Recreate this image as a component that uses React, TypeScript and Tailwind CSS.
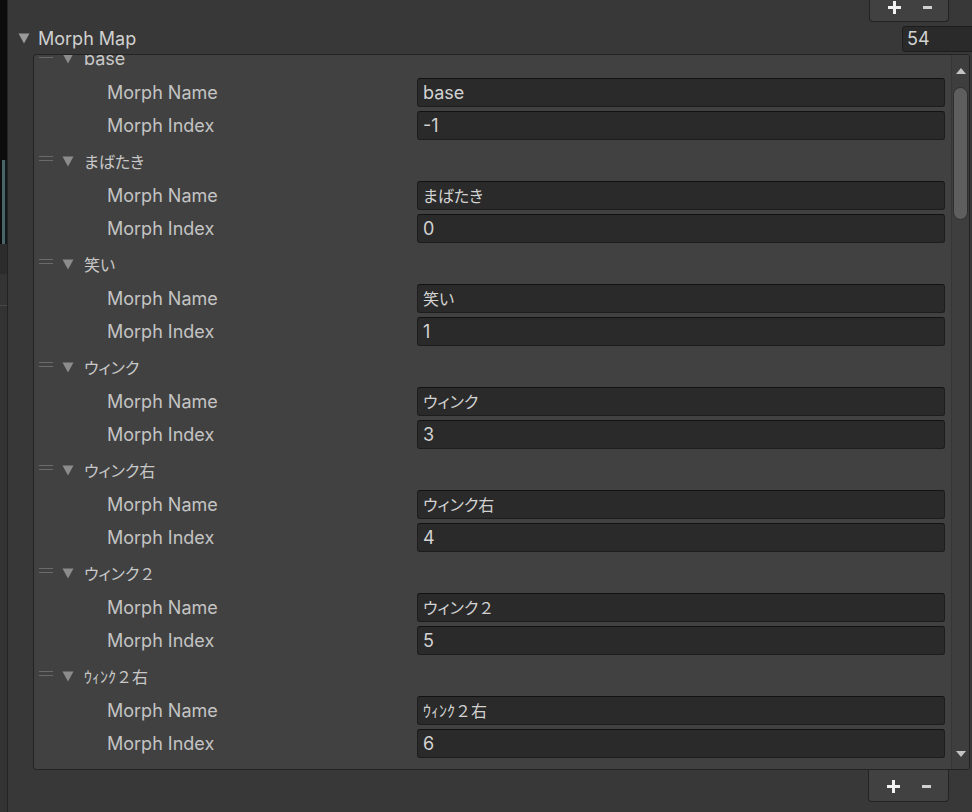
import React from 'react';

type Morph = { name: string; index: string };

const morphs: Morph[] = [
    { name: 'base', index: '-1' },
    { name: 'まばたき', index: '0' },
    { name: '笑い', index: '1' },
    { name: 'ウィンク', index: '3' },
    { name: 'ウィンク右', index: '4' },
    { name: 'ウィンク２', index: '5' },
    { name: 'ｳｨﾝｸ２右', index: '6' },
];

// the editor's japanese fallback font is narrower than the latin one
function JpText({ text }: { text: string }) {
    const parts = text.split(/([\u0000-\u007f]+|２)/).filter(Boolean);
    return (
        <>
            {parts.map((p, i) => {
                if (/^[\u0000-\u007f]+$/.test(p)) return <span key={i}>{p}</span>;
                if (p === '２') return <span key={i} className="text-[16px]">{p}</span>;
                return (
                    <span key={i} className="text-[16px] [font-feature-settings:'palt']">
                        {p}
                    </span>
                );
            })}
        </>
    );
}

function Triangle({ className }: { className?: string }) {
    return (
        <svg width="12" height="11" viewBox="0 0 12 11" className={className}>
            <path d="M0.5 0.5 L11.5 0.5 L6 10.5 Z" fill="currentColor" />
        </svg>
    );
}

function PlusMinus() {
    return (
        <div className="flex items-center">
            <svg width="13" height="13" viewBox="0 0 13 13" className="ml-[18px]">
                <rect x="5" y="0" width="3" height="13" fill="#f2f2f2" />
                <rect x="0" y="5" width="13" height="3" fill="#f2f2f2" />
            </svg>
            <svg width="9" height="3" viewBox="0 0 9 3" className="ml-[22px]">
                <rect x="0" y="0" width="9" height="3" fill="#cfcfcf" />
            </svg>
        </div>
    );
}

function Field({ value }: { value: string }) {
    return (
        <div className="flex-1 h-[29px] flex items-center pl-[5px] rounded-[3px] bg-[#2a2a2a] border border-[#1d1d1d] border-t-[#121212] text-[#d2d2d2] text-[18px] whitespace-nowrap overflow-hidden">
            <JpText text={value} />
        </div>
    );
}

function MorphElement({ morph }: { morph: Morph }) {
    return (
        <div className="pb-[2px]">
            <div className="h-[35px] flex items-center pl-[5px]">
                <div className="w-[14px] self-start mt-[12px] flex flex-col gap-[3px]">
                    <div className="h-px bg-[#6a6a6a]" />
                    <div className="h-px bg-[#6a6a6a]" />
                </div>
                <Triangle className="ml-[9px] text-[#8c8c8c]" />
                <span className="ml-[10px] text-[18px] text-[#c8c8c8] whitespace-nowrap">
                    <JpText text={morph.name} />
                </span>
            </div>
            <div className="h-[33px] flex items-center pr-[6px]">
                <span className="w-[383px] pl-[73px] text-[18px] text-[#c4c4c4] shrink-0">Morph Name</span>
                <Field value={morph.name} />
            </div>
            <div className="h-[33px] flex items-center pr-[6px]">
                <span className="w-[383px] pl-[73px] text-[18px] text-[#c4c4c4] shrink-0">Morph Index</span>
                <Field value={morph.index} />
            </div>
        </div>
    );
}

export default function App() {
    return (
        <div className="w-[972px] h-[812px] bg-[#383838] flex overflow-hidden font-['Inter','Noto_Sans_CJK_JP',sans-serif]">
            {/* left edge of the neighbouring window */}
            <div className="w-[8px] shrink-0 flex flex-col border-r border-[#232323]">
                <div className="h-[160px] bg-[#0c0c0c]" />
                <div className="h-[84px] bg-[#0c0c0c] flex pl-[2px]">
                    <div className="flex-1 bg-[#12191b] border-l-[3px] border-[#4b6469]" />
                </div>
                <div className="h-[30px] bg-[#2c2c2c]" />
                <div className="h-[32px] bg-[#343434] border-b border-[#4a4a4a]" />
                <div className="flex-1 bg-[#333333]" />
            </div>

            <div className="flex-1 flex flex-col">
                {/* top add / remove */}
                <div className="flex justify-end pr-[23px]">
                    <div className="w-[80px] h-[22px] bg-[#414141] border-x border-b border-[#232323] rounded-b-[4px] flex items-center pb-[7px]">
                        <PlusMinus />
                    </div>
                </div>

                {/* foldout header */}
                <div className="h-[32px] flex items-center pt-[1px]">
                    <Triangle className="ml-[10px] text-[#9a9a9a]" />
                    <span className="ml-[8px] text-[18px] text-[#d0d0d0]">Morph Map</span>
                    <div className="ml-auto w-[76px] h-[26px] mr-[-6px] pl-[4px] flex items-center rounded-[3px] bg-[#2a2a2a] border border-[#1d1d1d] text-[18px] text-[#d2d2d2]">
                        54
                    </div>
                </div>

                {/* list */}
                <div className="ml-[25px] mr-[2px] h-[716px] bg-[#414141] border border-[#232323] rounded-[3px] flex overflow-hidden">
                    <div className="flex-1 overflow-hidden">
                        <div className="mt-[-14px]">
                            {morphs.map((m) => (
                                <MorphElement key={m.name} morph={m} />
                            ))}
                        </div>
                    </div>
                    <div className="w-[18px] shrink-0 bg-[#3e3e3e] border-l border-[#363636] flex flex-col items-center">
                        <svg width="10" height="6" viewBox="0 0 10 6" className="mt-[13px]">
                            <path d="M0 6 L5 0 L10 6 Z" fill="#c4c4c4" />
                        </svg>
                        <div className="mt-[13px] w-[15px] h-[133px] rounded-full bg-[#5e5e5e] border border-[#2e2e2e]" />
                        <div className="flex-1" />
                        <svg width="10" height="6" viewBox="0 0 10 6" className="mb-[12px]">
                            <path d="M0 0 L10 0 L5 6 Z" fill="#c4c4c4" />
                        </svg>
                    </div>
                </div>

                {/* bottom add / remove */}
                <div className="flex justify-end pr-[23px]">
                    <div className="w-[81px] h-[32px] bg-[#414141] border-x border-b border-[#232323] rounded-b-[4px] flex items-center pt-[1px]">
                        <PlusMinus />
                    </div>
                </div>
            </div>
        </div>
    );
}
